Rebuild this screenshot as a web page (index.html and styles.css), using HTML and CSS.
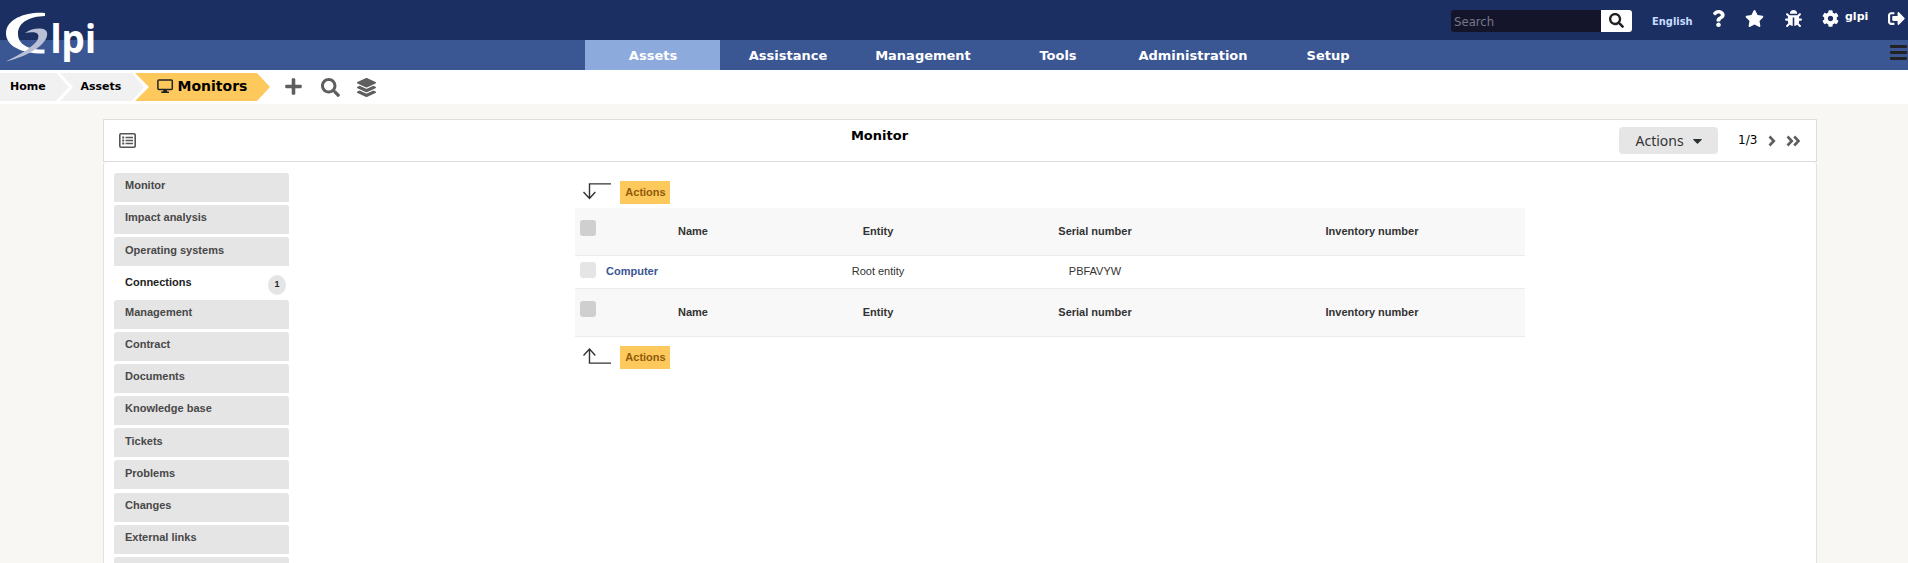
FILE: index.html
```html
<!DOCTYPE html>
<html lang="en">
<head>
<meta charset="utf-8">
<title>GLPI - Monitor</title>
<link rel="stylesheet" href="styles.css">
</head>
<body>
<header class="top">
  <div class="tools">
    <form class="search"><input class="search-input" type="text" placeholder="Search"><button class="search-btn" type="button" aria-label="Search"><svg width="15" height="15" viewBox="0 0 512 512"><path d="M505 442.7L405.3 343c-4.500-4.500-10.600-7-17-7H372c27.600-35.300 44-79.700 44-128C416 93.100 322.900 0 208 0S0 93.100 0 208s93.100 208 208 208c48.300 0 92.700-16.400 128-44v16.300c0 6.400 2.500 12.500 7 17l99.700 99.700c9.400 9.400 24.600 9.400 33.900 0l28.300-28.300c9.400-9.400 9.400-24.600.1-34zM208 336c-70.700 0-128-57.200-128-128 0-70.700 57.200-128 128-128 70.700 0 128 57.200 128 128 0 70.700-57.200 128-128 128z"/></svg></button></form>
    <a class="lang">English</a>
    <svg class="i-help" width="13" height="17" viewBox="0 0 384 512"><path d="M202.021 0C122.202 0 70.503 32.703 29.914 91.026c-7.363 10.580-5.093 25.086 5.178 32.874l43.138 32.709c10.373 7.865 25.132 6.026 33.253-4.148 25.049-31.381 43.630-49.449 82.757-49.449 30.764 0 68.816 19.799 68.816 49.631 0 22.552-18.617 34.134-48.993 51.164-35.423 19.860-82.299 44.576-82.299 106.405V320c0 13.255 10.745 24 24 24h72.471c13.255 0 24-10.745 24-24v-5.773c0-42.860 125.268-44.645 125.268-160.627C377.504 66.256 286.902 0 202.021 0zM192 373.459c-38.196 0-69.271 31.075-69.271 69.271 0 38.195 31.075 69.270 69.271 69.270s69.271-31.075 69.271-69.271-31.075-69.270-69.271-69.270z"/></svg>
    <svg class="i-star" width="19" height="17" viewBox="0 0 576 512"><path d="M259.300 17.800L194 150.200 47.900 171.500c-26.200 3.800-36.700 36.100-17.700 54.600l105.700 103-25 145.500c-4.500 26.300 23.200 46 46.400 33.700L288 439.600l130.700 68.700c23.200 12.200 50.900-7.400 46.400-33.700l-25-145.500 105.700-103c19-18.500 8.500-50.800-17.700-54.600L382 150.200 316.700 17.800c-11.700-23.600-45.600-23.900-57.400 0z"/></svg>
    <svg class="i-bug" width="17" height="17" viewBox="0 0 512 512"><path d="M511.988 288.900c-.478 17.430-15.217 31.100-32.653 31.100H424v16c0 21.864-4.882 42.584-13.600 61.145l60.228 60.228c12.496 12.497 12.496 32.758 0 45.255-12.498 12.497-32.759 12.496-45.256 0l-54.736-54.736C345.886 467.965 314.351 480 280 480V236c0-6.627-5.373-12-12-12h-24c-6.627 0-12 5.373-12 12v244c-34.351 0-65.886-12.035-90.636-32.108l-54.736 54.736c-12.498 12.497-32.759 12.496-45.256 0-12.496-12.497-12.496-32.758 0-45.255l60.228-60.228C92.882 378.584 88 357.864 88 336v-16H32.666C15.230 320 .491 306.330.013 288.900-.484 270.816 13.958 256 32 256h56v-58.745l-46.628-46.628c-12.496-12.497-12.496-32.758 0-45.255 12.498-12.497 32.758-12.497 45.256 0L141.255 160h229.489l54.627-54.627c12.498-12.497 32.758-12.497 45.256 0 12.496 12.497 12.496 32.758 0 45.255L424 197.255V256h56c18.042 0 32.484 14.816 31.988 32.900zM257 0c-61.856 0-112 50.144-112 112h224C369 50.144 318.856 0 257 0z"/></svg>
    <svg class="i-cog" width="17" height="17" viewBox="0 0 512 512"><path d="M487.400 315.700l-42.600-24.600c4.300-23.200 4.300-47 0-70.200l42.600-24.600c4.900-2.800 7.100-8.600 5.500-14-11.100-35.600-30-67.800-54.700-94.600-3.800-4.100-10-5.100-14.800-2.300L380.800 110c-17.900-15.400-38.500-27.300-60.800-35.100V25.800c0-5.600-3.900-10.500-9.400-11.700-36.700-8.200-74.300-7.800-109.200 0-5.500 1.200-9.400 6.100-9.400 11.700V75c-22.200 7.900-42.800 19.800-60.800 35.100L88.700 85.500c-4.900-2.800-11-1.900-14.800 2.300-24.700 26.700-43.600 58.900-54.700 94.600-1.700 5.400.6 11.200 5.500 14L67.300 221c-4.300 23.200-4.300 47 0 70.200l-42.600 24.600c-4.900 2.800-7.100 8.600-5.500 14 11.100 35.600 30 67.800 54.700 94.600 3.800 4.100 10 5.100 14.800 2.300l42.600-24.600c17.900 15.400 38.500 27.300 60.800 35.100v49.200c0 5.600 3.900 10.500 9.400 11.700 36.700 8.200 74.300 7.800 109.200 0 5.500-1.200 9.400-6.100 9.400-11.700v-49.200c22.200-7.900 42.800-19.800 60.800-35.100l42.600 24.600c4.900 2.800 11 1.900 14.800-2.300 24.700-26.700 43.600-58.900 54.700-94.600 1.500-5.500-.7-11.300-5.600-14.100zM256 336c-44.100 0-80-35.900-80-80s35.900-80 80-80 80 35.900 80 80-35.900 80-80 80z"/></svg>
    <a class="user">glpi</a>
    <svg class="i-out" width="17" height="17" viewBox="0 0 512 512"><path d="M497 273L329 441c-15 15-41 4.500-41-17v-96H152c-13.300 0-24-10.700-24-24v-96c0-13.300 10.700-24 24-24h136V88c0-21.400 25.900-32 41-17l168 168c9.300 9.400 9.300 24.600 0 34zM192 436v-40c0-6.600-5.400-12-12-12H96c-17.700 0-32-14.300-32-32V160c0-17.700 14.300-32 32-32h84c6.600 0 12-5.400 12-12V76c0-6.600-5.400-12-12-12H96c-53 0-96 43-96 96v192c0 53 43 96 96 96h84c6.600 0 12-5.400 12-12z"/></svg>
  </div>
  <svg class="logo" width="100" height="64" viewBox="0 0 100 64">
    <path fill="#b9c0d6" d="M25 33C31 28.500 40 27.500 44.500 29.500C49 32 47.500 38 43 43C36 51 21 57 6 61.500C19 55 30 49 36 42C40 37 39 33 34 32.300C31 32 28 32.300 25 33Z"/>
    <path fill="#fff" d="M45 13C28 11.500 6 18 6 33.500C6 46 22 54 44.500 53.500L44.500 49.500C30 50.500 18 45 18 34C18 22 30 16.500 45 16Z"/>
    <path fill="#b9c0d6" d="M31 46.500L35 49.500C27 55 17 58.500 6 61.500C17 56.500 25 52 31 46.500Z"/>
    <text class="logo-text" transform="translate(50.500 52.500) scale(.95 1)">lpi</text>
  </svg>
</header>
<nav class="nav">
  <a class="nav-item on">Assets</a><a class="nav-item">Assistance</a><a class="nav-item">Management</a><a class="nav-item">Tools</a><a class="nav-item">Administration</a><a class="nav-item">Setup</a>
  <svg class="burger" width="17" height="17" viewBox="0 0 17 17"><path d="M1 1.500H16M1 7.500H16M1 13.500H16" stroke="#222" stroke-width="2.800" stroke-linecap="round"/></svg>
</nav>
<div class="crumbs">
  <a class="crumb home">Home</a>
  <a class="crumb mid">Assets</a>
  <a class="crumb cur"><svg width="17" height="15" viewBox="0 0 17 15"><rect x=".9" y=".9" width="14.400" height="9.600" rx="1" fill="none" stroke="#222" stroke-width="1.500"/><path d="M6.600 10.500H9.600L10.200 12.600H12V14H4.200V12.600H6Z" fill="#222"/></svg>Monitors</a>
  <svg class="c-plus" width="17" height="19" viewBox="0 0 448 512"><path d="M416 208H272V64c0-17.670-14.330-32-32-32h-32c-17.670 0-32 14.330-32 32v144H32c-17.670 0-32 14.330-32 32v32c0 17.670 14.330 32 32 32h144v144c0 17.670 14.330 32 32 32h32c17.670 0 32-14.330 32-32V304h144c17.670 0 32-14.330 32-32v-32c0-17.670-14.330-32-32-32z"/></svg>
  <svg class="c-find" width="19" height="19" viewBox="0 0 512 512"><path d="M505 442.700L405.300 343c-4.500-4.500-10.600-7-17-7H372c27.600-35.300 44-79.700 44-128C416 93.100 322.900 0 208 0S0 93.100 0 208s93.100 208 208 208c48.300 0 92.700-16.400 128-44v16.300c0 6.400 2.500 12.500 7 17l99.700 99.700c9.400 9.400 24.600 9.400 33.900 0l28.300-28.300c9.400-9.400 9.400-24.600.1-34zM208 336c-70.700 0-128-57.200-128-128 0-70.700 57.200-128 128-128 70.700 0 128 57.200 128 128 0 70.700-57.200 128-128 128z"/></svg>
  <svg class="c-layers" width="19" height="19" viewBox="0 0 512 512"><path d="M12.410 148.020l232.940 105.670c6.800 3.090 14.490 3.090 21.290 0l232.940-105.670c16.550-7.510 16.550-32.520 0-40.030L266.650 2.310a25.607 25.607 0 0 0-21.290 0L12.410 107.980c-16.550 7.510-16.550 32.530 0 40.040zm487.180 88.280l-58.090-26.330-161.640 73.270c-7.560 3.430-15.590 5.170-23.860 5.170s-16.290-1.740-23.860-5.170L70.510 209.970l-58.100 26.330c-16.550 7.500-16.550 32.500 0 40l232.940 105.590c6.800 3.080 14.490 3.080 21.290 0L499.590 276.300c16.550-7.500 16.550-32.500 0-40zm0 127.800l-57.870-26.230-161.860 73.370c-7.560 3.430-15.590 5.170-23.860 5.170s-16.290-1.740-23.860-5.170L70.290 337.870 12.410 364.100c-16.550 7.500-16.550 32.500 0 40l232.940 105.590c6.800 3.080 14.490 3.080 21.290 0L499.590 404.100c16.550-7.500 16.550-32.500 0-40z"/></svg>
</div>
<main class="page">
  <div class="head">
    <svg class="i-list" width="17" height="15" viewBox="0 0 17 15"><rect x=".8" y=".8" width="15.400" height="13.400" rx="1.200" fill="none" stroke="#555" stroke-width="1.600"/><path d="M6.500 4.500H14M6.500 7.500H14M6.500 10.500H14" stroke="#555" stroke-width="1.300"/><path d="M3.200 4.500H5.200M3.200 7.500H5.200M3.200 10.500H5.200" stroke="#555" stroke-width="2"/></svg>
    <h1 class="title">Monitor</h1>
    <div class="head-right">
      <button class="actions" type="button">Actions<svg width="9" height="5" viewBox="0 0 9 5"><path d="M.3 0H8.700Q9 .5 8.500 1L5 4.600Q4.500 5 4 4.600L.5 1Q0 .5.300 0Z"/></svg></button>
      <span class="count">1/3</span>
      <svg class="i-next" width="8" height="12" viewBox="0 0 8 12"><path d="M1.500 1.500L5.800 6L1.500 10.500"/></svg>
      <svg class="i-last" width="15" height="12" viewBox="0 0 15 12"><path d="M1.500 1.500L5.800 6L1.500 10.500M8.200 1.500L12.500 6L8.200 10.500"/></svg>
    </div>
  </div>
  <div class="body">
    <ul class="tabs">
      <li class="tab">Monitor</li><li class="tab">Impact analysis</li><li class="tab">Operating systems</li>
      <li class="tab active">Connections<span class="badge">1</span></li>
      <li class="tab">Management</li><li class="tab">Contract</li><li class="tab">Documents</li><li class="tab">Knowledge base</li><li class="tab">Tickets</li><li class="tab">Problems</li><li class="tab">Changes</li><li class="tab">External links</li><li class="tab"></li>
    </ul>
    <section class="content">
      <div class="mass"><svg width="28" height="17" viewBox="0 0 28 17"><path d="M28 .9H6.500V15.500M.5 9L6.500 15.500L12.300 9"/></svg><a class="mass-btn">Actions</a></div>
      <table class="grid">
        <colgroup><col class="w-check"><col class="w-name"><col class="w-entity"><col class="w-serial"><col class="w-inv"></colgroup>
        <tr class="hrow"><th><span class="check dark"></span></th><th>Name</th><th>Entity</th><th>Serial number</th><th>Inventory number</th></tr>
        <tr class="drow"><td><span class="check"></span></td><td class="name">Computer</td><td>Root entity</td><td>PBFAVYW</td><td></td></tr>
        <tr class="hrow"><th><span class="check dark"></span></th><th>Name</th><th>Entity</th><th>Serial number</th><th>Inventory number</th></tr>
      </table>
      <div class="mass bottom"><svg width="28" height="17" viewBox="0 0 28 17"><path d="M28 15.100H6.500V1M.5 7.500L6.500 1L12.300 7.500"/></svg><a class="mass-btn">Actions</a></div>
    </section>
  </div>
</main>
</body>
</html>
```
FILE: styles.css
```css
* { box-sizing: border-box; }
html, body { height: 100%; }
body { margin: 0; overflow: hidden; background: #f8f7f3; font: 11px/13px "Liberation Sans", Arial, sans-serif; color: #333; display: flex; flex-direction: column; }
svg { display: block; flex: none; }

.top { position: relative; z-index: 1; flex: none; height: 40px; background: #1b2f62; }
.logo { position: absolute; left: 0; top: 0; }
.logo-text { font: 700 39px "Noto Sans", sans-serif; fill: #fff; }
.tools { display: flex; align-items: flex-start; padding-left: 1451px; fill: #fff; }
.search { display: flex; width: 181px; height: 22px; margin-top: 10px; border-radius: 3px; overflow: hidden; }
.search-input { width: 150px; height: 22px; padding: 1px 3px; border: 0; background: #14152a; color: #fff; font: 13px "DejaVu Sans Condensed", "DejaVu Sans", sans-serif; font-stretch: condensed; }
.search-input::placeholder { color: #75788a; opacity: 1; }
.search-btn { display: flex; width: 31px; height: 22px; padding: 3px 0 0 8px; border: 0; background: #fff; fill: #222; }
.lang { margin: 15px 0 0 20px; width: 40px; color: #c8dcff; font: 700 11px/14px "DejaVu Sans Condensed", "DejaVu Sans", sans-serif; font-stretch: condensed; }
.i-help { margin: 10px 0 0 20px; }
.i-star { margin: 10px 0 0 20px; }
.i-bug { margin: 10px 0 0 21px; }
.i-cog { margin: 10px 0 0 20px; }
.user { width: 24px; margin: 10px 0 0 6px; color: #fff; font: 700 11px/14px "DejaVu Sans", sans-serif; }
.i-out { margin: 10px 0 0 19px; }

.nav { position: relative; flex: none; display: flex; height: 30px; padding-left: 585px; background: #3a5693; }
.nav-item { width: 135px; padding-left: 1px; text-align: center; color: #fff; font: 700 13px/31px "DejaVu Sans", sans-serif; }
.nav-item.on { background: #8caadb; }
.burger { position: absolute; right: 1px; top: 5px; }

.crumbs { flex: none; display: flex; height: 34px; padding-top: 3px; background: #fff; color: #000; fill: #5e5e5e; }
.crumb { height: 28px; font: 700 11px/27px "DejaVu Sans", sans-serif; }
.home { width: 69px; padding-left: 10px; background: #f1f1f1; clip-path: polygon(0 0, 56px 0, 100% 50%, 56px 100%, 0 100%); }
.mid { width: 84px; margin-left: -9px; padding-left: 20.500px; background: #f1f1f1; clip-path: polygon(0 0, 72px 0, 100% 50%, 72px 100%, 0 100%, 13px 50%); }
.cur { display: flex; gap: 4px; width: 135px; margin-left: -9px; padding-left: 21.500px; background: #fec95c; font-size: 14px; line-height: 26px; clip-path: polygon(0 0, 122px 0, 100% 50%, 122px 100%, 0 100%, 14px 50%); }
.cur svg { margin-top: 6px; }
.c-plus { margin: 4px 0 0 15px; }
.c-find { margin: 5px 0 0 19px; }
.c-layers { margin: 5px 0 0 17px; }

.page { flex: 1; width: 1714px; margin: 15px 0 0 103px; display: flex; flex-direction: column; }
.head { flex: none; display: grid; grid-template-columns: 300px 1fr 300px; height: 43px; border: 1px solid #dedede; background: #fff; }
.i-list { margin: 13px 0 0 15px; }
.title { margin: 8px 0 0; padding-right: 161px; text-align: center; color: #000; font: 700 13px/16px "DejaVu Sans", sans-serif; }
.head-right { display: flex; margin-left: 103px; fill: none; stroke: #5e5e5e; stroke-width: 2.600; }
.actions { display: flex; width: 99px; height: 27px; margin-top: 7px; padding: 0 0 0 16.500px; gap: 9px; border: 0; border-radius: 4px; background: #e6e6e6; color: #333; font: 14px/27px "Noto Sans", sans-serif; }
.actions svg { margin-top: 12px; fill: #2c3234; stroke: none; }
.count { width: 21px; margin: 12px 0 0 20px; color: #000; font: 12px/16px "DejaVu Sans", sans-serif; }
.i-next { margin: 15px 0 0 9px; }
.i-last { margin: 15px 0 0 10px; }

.body { flex: 1; display: flex; border: solid #e2e2e2; border-width: 0 1px; border-radius: 3px 3px 0 0; background: #fff; }
.tabs { list-style: none; width: 175px; margin: 11.200px 0 0 10px; padding: 0; }
.tab { height: 29px; margin-bottom: 3.120px; padding: 6.150px 11px; border-radius: 3px 3px 0 0; background: #e5e5e5; color: #484848; font-weight: 700; }
.active { display: flex; justify-content: space-between; height: 27.300px; padding: 6.600px 3px 0 11px; background: #fff; color: #222; }
.badge { width: 18px; height: 20px; margin-top: -1.300px; border-radius: 50%; background: #e5e5e5; text-align: center; font-size: 9px; line-height: 19px; }
.content { width: 950px; margin-left: 286px; padding-top: 19px; }
.mass { display: flex; gap: 9px; height: 27px; padding-left: 8px; fill: none; stroke: #333; stroke-width: 1.400; }
.mass svg { margin-top: 2px; }
.bottom { margin-top: 9px; }
.mass-btn { width: 50px; height: 23px; padding-left: 1px; background: #fec95c; color: #8f5a0a; font-weight: 700; line-height: 23px; text-align: center; }
.grid { width: 950px; table-layout: fixed; border-collapse: separate; border-spacing: 0; }
.w-check { width: 26px; }
.w-name { width: 184px; }
.w-entity { width: 186px; }
.w-serial { width: 248px; }
.w-inv { width: 306px; }
.grid th, .grid td { padding: 0; border-bottom: 1px solid #ebebeb; text-align: center; vertical-align: top; }
.hrow th { height: 48px; padding-top: 17px; background: #f8f8f8; color: #333; }
.hrow th:first-child { padding-top: 12px; }
.drow td { height: 33px; padding-top: 9px; }
.drow td:first-child { padding-top: 6px; }
.drow .name { padding-left: 5px; text-align: left; font-weight: 700; color: #3a5693; }
.check { display: block; width: 16px; height: 16px; margin-left: 5px; border-radius: 3px; background: #e5e5e5; }
.check.dark { background: #cfcfcf; }
```
